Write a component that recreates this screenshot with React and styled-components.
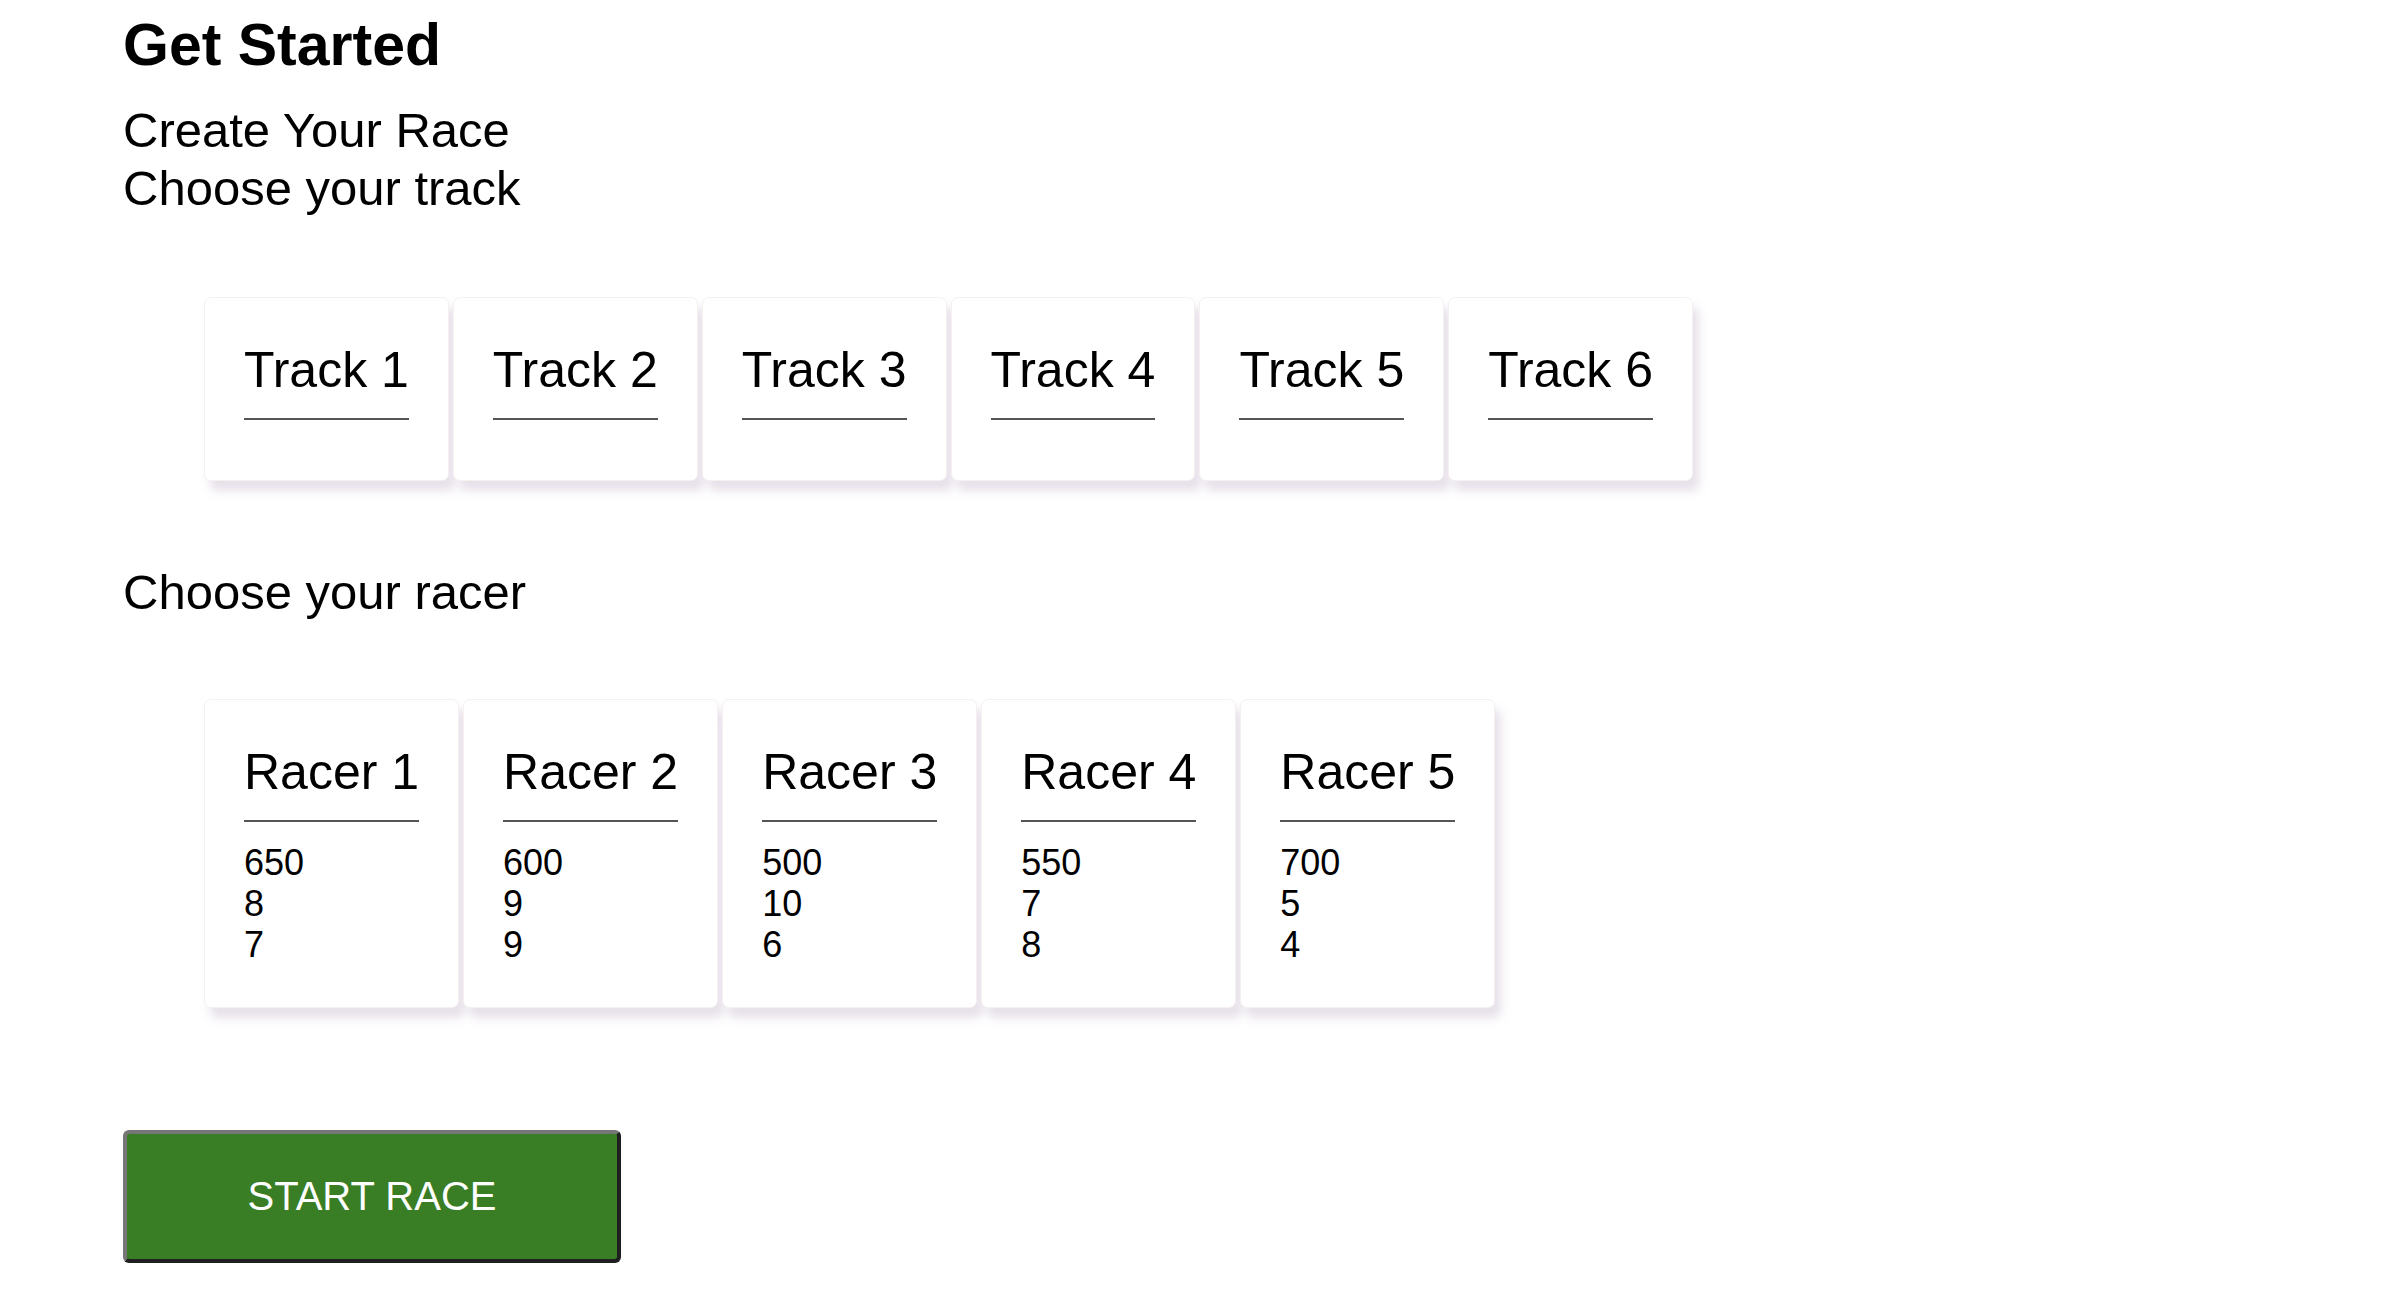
import React from 'react'
import styled, { createGlobalStyle } from 'styled-components'

const GlobalStyle = createGlobalStyle`
  html, body {
    margin: 0;
    padding: 0;
    background: #ffffff;
    font-family: "Liberation Sans", Arial, sans-serif;
    color: #000000;
  }
`

const tracks = ['Track 1', 'Track 2', 'Track 3', 'Track 4', 'Track 5', 'Track 6']

const racers = [
  { name: 'Racer 1', stats: [650, 8, 7] },
  { name: 'Racer 2', stats: [600, 9, 9] },
  { name: 'Racer 3', stats: [500, 10, 6] },
  { name: 'Racer 4', stats: [550, 7, 8] },
  { name: 'Racer 5', stats: [700, 5, 4] }
]

export default function App() {
  return (
    <>
      <GlobalStyle />
      <Page>
        <Title>Get Started</Title>
        <Intro>
          <Line>Create Your Race</Line>
          <Line>Choose your track</Line>
        </Intro>
        <CardList $top={80}>
          {tracks.map((t) => (
            <Card key={t} $bottom={60}>
              <CardHeading>{t}</CardHeading>
            </Card>
          ))}
        </CardList>
        <Section>
          <Line>Choose your racer</Line>
        </Section>
        <CardList $top={78}>
          {racers.map((r) => (
            <Card key={r.name} $bottom={42}>
              <CardHeading>{r.name}</CardHeading>
              <Stats>
                {r.stats.map((s, i) => (
                  <Stat key={`${r.name}-${i}`}>{s}</Stat>
                ))}
              </Stats>
            </Card>
          ))}
        </CardList>
        <StartButton type="button">START RACE</StartButton>
      </Page>
    </>
  )
}

// STYLES
const Page = styled.main`
  display: flex;
  flex-direction: column;
  align-items: flex-start;
  padding: 11px 0 40px 123px;
`

const Title = styled.h1`
  margin: 0;
  font-size: 59px;
  font-weight: 700;
  line-height: normal;
`

const Intro = styled.div`
  margin-top: 22px;
  display: flex;
  flex-direction: column;
`

const Section = styled.div`
  margin-top: 82px;
`

const Line = styled.div`
  font-size: 49px;
  line-height: 58px;
`

const CardList = styled.ul`
  list-style: none;
  display: flex;
  gap: 4px;
  margin: ${(p) => p.$top}px 0 0 0;
  padding: 0 0 0 81px;
`

const Card = styled.li`
  display: flex;
  flex-direction: column;
  align-items: flex-start;
  padding: 43px 39px ${(p) => p.$bottom}px 39px;
  background: #ffffff;
  border: 1px solid #f6f0f1;
  border-radius: 7px;
  box-shadow: 6px 10px 10px rgba(185, 170, 195, 0.35);
`

const CardHeading = styled.h3`
  margin: 0;
  padding-bottom: 19px;
  font-size: 50px;
  font-weight: 400;
  line-height: normal;
  border-bottom: 2px solid #555555;
`

const Stats = styled.div`
  display: flex;
  flex-direction: column;
  margin-top: 20px;
`

const Stat = styled.span`
  font-size: 36px;
  line-height: 41px;
`

const StartButton = styled.button`
  margin-top: 122px;
  width: 498px;
  height: 133px;
  background: #397d24;
  color: #ffffff;
  font-family: "Liberation Sans", Arial, sans-serif;
  font-size: 40px;
  border-width: 4px;
  border-style: solid;
  border-color: #767676 #1f1f1f #1f1f1f #767676;
  border-radius: 6px;
  cursor: pointer;
`
